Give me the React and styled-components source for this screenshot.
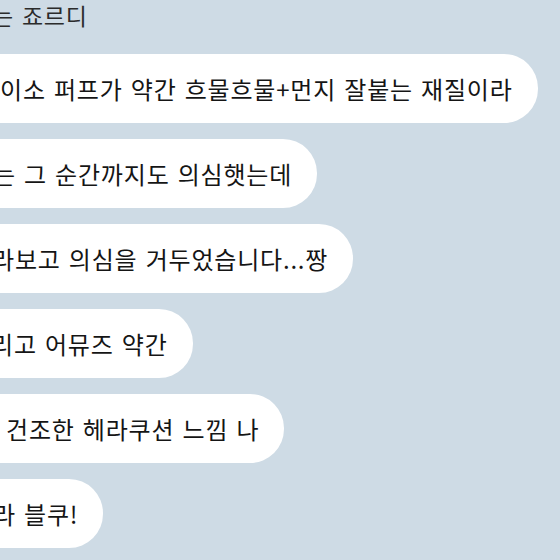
import React from 'react';
import { styled, createGlobalStyle } from "styled-components";

//말풍선 목록 (왼쪽이 잘린 상태 그대로)
const messages = [
    { text: "이소 퍼프가 약간 흐물흐물+먼지 잘붙는 재질이라", shift: 0 },
    { text: "는 그 순간까지도 의심햇는데", shift: -7 },
    { text: "라보고 의심을 거두었습니다...짱", shift: -8 },
    { text: "리고 어뮤즈 약간", shift: -9 },
    { text: "건조한 헤라쿠션 느낌 나", shift: 6 },
    { text: "라 블쿠!", shift: -7 },
];

const App = () => {
    return (
        <>
            <GlobalStyle />
            <Chat>
                <Label>는 죠르디</Label>
                {messages.map((m, i) => (
                    <Bubble key={i} $shift={m.shift}>{m.text}</Bubble>
                ))}
            </Chat>
        </>
    );
};

export default App;

//styled
const GlobalStyle = createGlobalStyle`
    html, body {
        margin: 0;
        padding: 0;
        background: #cedbe5;
    }
`;

const Chat = styled.div`
    width: 560px;
    height: 560px;
    overflow: hidden;
    display: flex;
    flex-direction: column;
    align-items: flex-start;
    gap: 16px;
    font-family: "Noto Sans CJK KR", "Noto Sans", sans-serif;
    letter-spacing: 0.8px;
    word-spacing: 2px;
`;

const Label = styled.div`
    margin-left: -8px;
    height: 38px;
    line-height: 30px;
    font-size: 23px;
    color: #2b2b2b;
`;

const Bubble = styled.div`
    margin-left: ${p => p.$shift - 40}px;
    height: 69px;
    display: flex;
    align-items: center;
    padding: 0 25px 0 40px;
    box-sizing: border-box;
    background: #ffffff;
    border-radius: 34px;
    font-size: 24px;
    color: #151515;
    white-space: pre;
`;
